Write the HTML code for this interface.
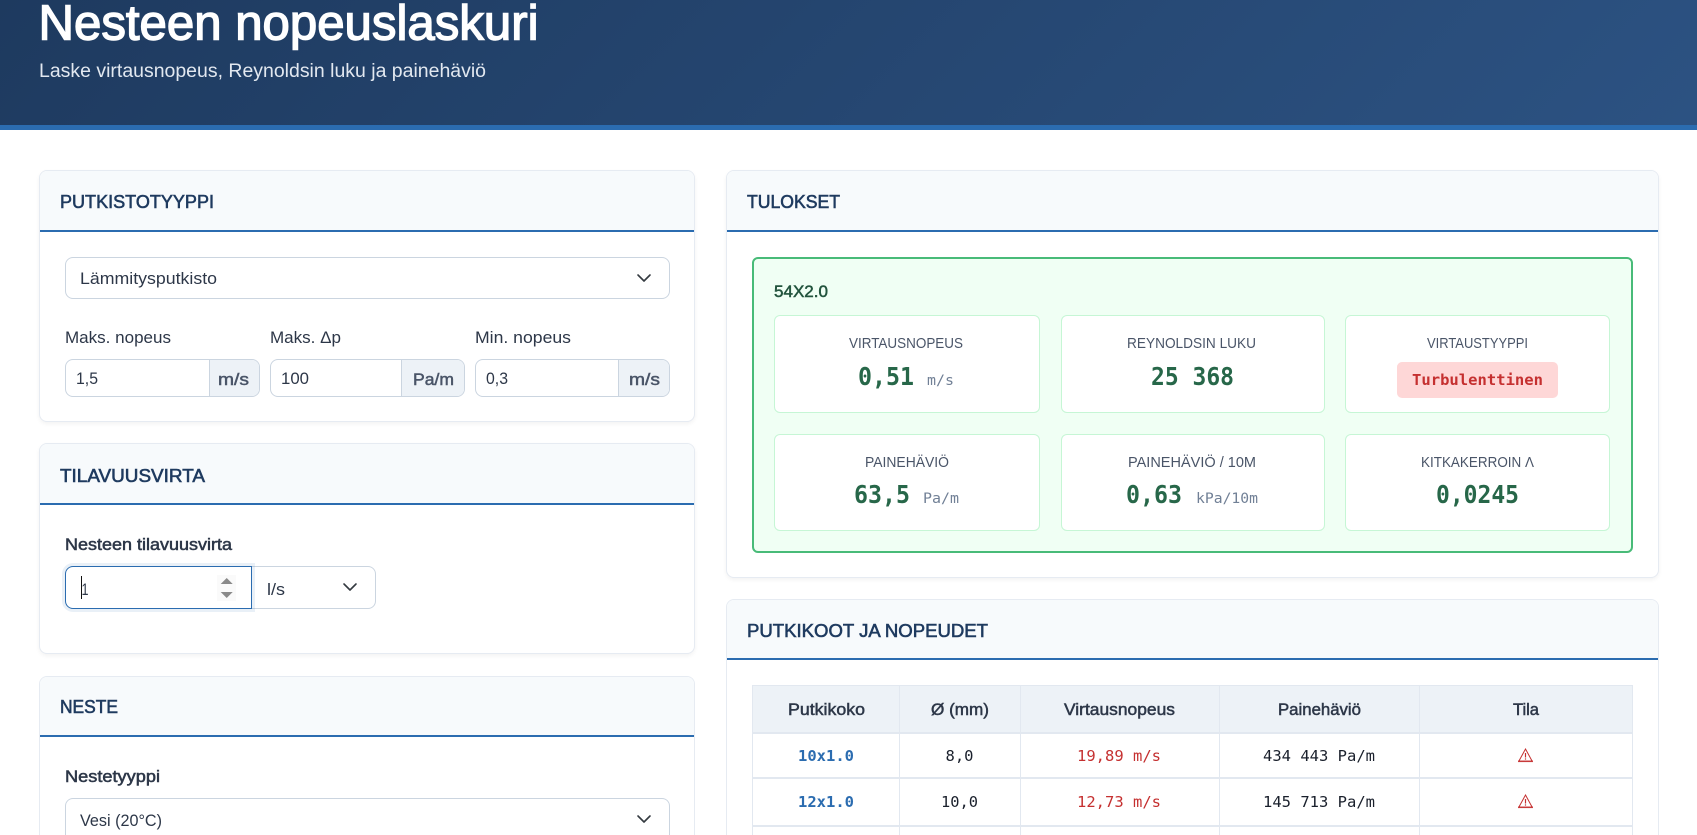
<!DOCTYPE html>
<html lang="fi"><head><meta charset="utf-8"><title>Nesteen nopeuslaskuri</title>
<style>
html,body{margin:0;padding:0;background:#fff;width:1697px;height:835px;overflow:hidden}
#page{position:relative;width:1697px;height:835px;overflow:hidden;background:#fff}
.b{position:absolute;box-sizing:border-box}
.hdr{left:0;top:0;width:1697px;height:130px;background:linear-gradient(135deg,#1e3a5f,#2c5282);border-bottom:5px solid #2b6cb0}
.card{background:#fff;border:1px solid #e6ebf2;border-radius:8px;box-shadow:0 2px 4px rgba(0,0,0,.05);overflow:hidden}
.ch{position:absolute;left:0;right:0;top:0;background:#f7fafc;border-bottom:2px solid #2b6cb0}
.f{background:#fff;border:1px solid #cbd5e0;border-radius:8px}
.ad{background:#edf2f7;border-left:1px solid #cbd5e0;border-radius:0 7px 7px 0}
.m{background:#fff;border:1px solid #c6f6d5;border-radius:6px}
svg.o{position:absolute;left:0;top:0}
text{font-family:"Liberation Sans",Arial,sans-serif;fill:#2d3748;font-size:17px}
.mono{font-family:"DejaVu Sans Mono","Liberation Mono",monospace}
.ct{font-size:18px;fill:#1e3a5f;stroke:#1e3a5f;stroke-width:.6px}
.sb{fill:#2d3748;stroke:#2d3748;stroke-width:.55px}
.lb{font-size:15px;fill:#4a5568}
.v{font-family:"DejaVu Sans Mono","Liberation Mono",monospace;font-weight:700;font-size:24.5px;fill:#276749}
.u{font-family:"DejaVu Sans Mono","Liberation Mono",monospace;font-size:14px;fill:#718096}
.th{font-size:16.5px;fill:#2d3748;stroke:#2d3748;stroke-width:.5px}
.td{font-family:"DejaVu Sans Mono","Liberation Mono",monospace;font-size:15.5px;fill:#1a202c}
.ad2{fill:#4a5568;stroke:#4a5568;stroke-width:.5px}
</style></head><body>
<div id="page">
<div class="b hdr"></div>

<div class="b card" style="left:39px;top:170px;width:656px;height:252px"><div class="ch" style="height:59px"></div></div>
<div class="b card" style="left:39px;top:443px;width:656px;height:211px"><div class="ch" style="height:59px"></div></div>
<div class="b card" style="left:39px;top:676px;width:656px;height:159px;border-bottom:none;border-radius:8px 8px 0 0;box-shadow:none"><div class="ch" style="height:58px"></div></div>
<div class="b card" style="left:726px;top:170px;width:933px;height:408px"><div class="ch" style="height:59px"></div></div>
<div class="b card" style="left:726px;top:599px;width:933px;height:236px;border-bottom:none;border-radius:8px 8px 0 0;box-shadow:none"><div class="ch" style="height:58px"></div></div>

<div class="b f" style="left:65px;top:257px;width:605px;height:42px"></div>
<div class="b f" style="left:65px;top:359px;width:195px;height:38px"><div class="b ad" style="left:143px;top:0;width:50px;height:36px"></div></div>
<div class="b f" style="left:270px;top:359px;width:195px;height:38px"><div class="b ad" style="left:130px;top:0;width:63px;height:36px"></div></div>
<div class="b f" style="left:475px;top:359px;width:195px;height:38px"><div class="b ad" style="left:142px;top:0;width:51px;height:36px"></div></div>

<div class="b f" style="left:240px;top:566px;width:136px;height:43px;border-radius:0 8px 8px 0"></div>
<div class="b" style="left:65px;top:566px;width:187px;height:43px;background:#fff;border:1px solid #2b6cb0;border-radius:8px 0 0 8px;box-shadow:0 0 0 3px rgba(43,108,176,.1)"></div>
<div class="b" style="left:217px;top:575px;width:19px;height:26px;background:#fafafa"></div>
<div class="b" style="left:81px;top:576px;width:1px;height:23px;background:#111"></div>

<div class="b f" style="left:65px;top:798px;width:605px;height:37px;border-bottom:none;border-radius:8px 8px 0 0"></div>

<div class="b" style="left:752px;top:257px;width:881px;height:296px;background:#f0fff4;border:2px solid #48bb78;border-radius:6px"></div>
<div class="b m" style="left:774px;top:315px;width:266px;height:98px"></div>
<div class="b m" style="left:1061px;top:315px;width:264px;height:98px"></div>
<div class="b m" style="left:1345px;top:315px;width:265px;height:98px"></div>
<div class="b m" style="left:774px;top:434px;width:266px;height:97px"></div>
<div class="b m" style="left:1061px;top:434px;width:264px;height:97px"></div>
<div class="b m" style="left:1345px;top:434px;width:265px;height:97px"></div>
<div class="b" style="left:1397px;top:362px;width:161px;height:36px;background:#fed7d7;border-radius:5px"></div>

<div class="b" style="left:752px;top:685px;width:881px;height:48px;background:#edf2f7"></div>
<div class="b" style="left:752px;top:685px;width:881px;height:150px;border:1px solid #e2e8f0;border-bottom:none"></div>
<div class="b" style="left:752px;top:732px;width:881px;height:2px;background:#e2e8f0"></div>
<div class="b" style="left:752px;top:777px;width:881px;height:2px;background:#e2e8f0"></div>
<div class="b" style="left:752px;top:825px;width:881px;height:2px;background:#e2e8f0"></div>
<div class="b" style="left:899px;top:685px;width:1px;height:150px;background:#e2e8f0"></div>
<div class="b" style="left:1020px;top:685px;width:1px;height:150px;background:#e2e8f0"></div>
<div class="b" style="left:1219px;top:685px;width:1px;height:150px;background:#e2e8f0"></div>
<div class="b" style="left:1419px;top:685px;width:1px;height:150px;background:#e2e8f0"></div>

<svg class="o" width="1697" height="835" viewBox="0 0 1697 835" xmlns="http://www.w3.org/2000/svg">
<text x="38.5" y="39.5" textLength="500" lengthAdjust="spacingAndGlyphs" style="font-size:49px;fill:#fff;stroke:#fff;stroke-width:1.4px">Nesteen nopeuslaskuri</text>
<text x="39" y="77" textLength="447" lengthAdjust="spacingAndGlyphs" style="font-size:19px;fill:#e2e8f0">Laske virtausnopeus, Reynoldsin luku ja painehäviö</text>

<text class="ct" x="60" y="208" textLength="154" lengthAdjust="spacingAndGlyphs">PUTKISTOTYYPPI</text>
<text class="ct" x="60" y="482" textLength="145" lengthAdjust="spacingAndGlyphs">TILAVUUSVIRTA</text>
<text class="ct" x="60" y="713" textLength="58" lengthAdjust="spacingAndGlyphs">NESTE</text>
<text class="ct" x="747" y="208" textLength="93" lengthAdjust="spacingAndGlyphs">TULOKSET</text>
<text class="ct" x="747" y="637" textLength="241" lengthAdjust="spacingAndGlyphs">PUTKIKOOT JA NOPEUDET</text>

<text x="80" y="284" textLength="137" lengthAdjust="spacingAndGlyphs">Lämmitysputkisto</text>
<text x="65" y="343" textLength="106" lengthAdjust="spacingAndGlyphs">Maks. nopeus</text>
<text x="270" y="343" textLength="71" lengthAdjust="spacingAndGlyphs">Maks. Δp</text>
<text x="475" y="343" textLength="96" lengthAdjust="spacingAndGlyphs">Min. nopeus</text>
<text x="76" y="384" textLength="22" lengthAdjust="spacingAndGlyphs">1,5</text>
<text x="281" y="384" textLength="28" lengthAdjust="spacingAndGlyphs">100</text>
<text x="486" y="384" textLength="22" lengthAdjust="spacingAndGlyphs">0,3</text>
<text class="ad2" x="218" y="385" textLength="31" lengthAdjust="spacingAndGlyphs">m/s</text>
<text class="ad2" x="413" y="385" textLength="41" lengthAdjust="spacingAndGlyphs">Pa/m</text>
<text class="ad2" x="629" y="385" textLength="31" lengthAdjust="spacingAndGlyphs">m/s</text>

<text class="sb" x="65" y="550" textLength="167" lengthAdjust="spacingAndGlyphs">Nesteen tilavuusvirta</text>
<text x="81.5" y="595" textLength="7" lengthAdjust="spacingAndGlyphs">1</text>
<text x="267" y="595" textLength="18" lengthAdjust="spacingAndGlyphs">l/s</text>
<text class="sb" x="65" y="782" textLength="95" lengthAdjust="spacingAndGlyphs">Nestetyyppi</text>
<text x="80" y="826" textLength="82" lengthAdjust="spacingAndGlyphs">Vesi (20°C)</text>

<text x="774" y="297" textLength="54" lengthAdjust="spacingAndGlyphs" style="fill:#22543d;stroke:#22543d;stroke-width:.5px">54X2.0</text>

<text class="lb" x="849" y="348" textLength="114" lengthAdjust="spacingAndGlyphs">VIRTAUSNOPEUS</text>
<text class="lb" x="1127" y="348" textLength="129" lengthAdjust="spacingAndGlyphs">REYNOLDSIN LUKU</text>
<text class="lb" x="1427" y="348" textLength="101" lengthAdjust="spacingAndGlyphs">VIRTAUSTYYPPI</text>
<text class="lb" x="865" y="467" textLength="84" lengthAdjust="spacingAndGlyphs">PAINEHÄVIÖ</text>
<text class="lb" x="1128" y="467" textLength="128" lengthAdjust="spacingAndGlyphs">PAINEHÄVIÖ / 10M</text>
<text class="lb" x="1421" y="467" textLength="113" lengthAdjust="spacingAndGlyphs">KITKAKERROIN Λ</text>

<text class="v" x="858" y="385" textLength="56" lengthAdjust="spacingAndGlyphs">0,51</text>
<text class="u" x="927" y="385" textLength="27" lengthAdjust="spacingAndGlyphs">m/s</text>
<text class="v" x="1151" y="385" textLength="83" lengthAdjust="spacingAndGlyphs">25 368</text>
<text class="mono" x="1412" y="385" textLength="131" lengthAdjust="spacingAndGlyphs" style="font-weight:700;font-size:15.5px;fill:#c53030">Turbulenttinen</text>
<text class="v" x="854" y="503" textLength="56" lengthAdjust="spacingAndGlyphs">63,5</text>
<text class="u" x="923" y="503" textLength="36" lengthAdjust="spacingAndGlyphs">Pa/m</text>
<text class="v" x="1126" y="503" textLength="56" lengthAdjust="spacingAndGlyphs">0,63</text>
<text class="u" x="1196" y="503" textLength="62" lengthAdjust="spacingAndGlyphs">kPa/10m</text>
<text class="v" x="1436" y="503" textLength="83" lengthAdjust="spacingAndGlyphs">0,0245</text>

<text class="th" x="788" y="715" textLength="77" lengthAdjust="spacingAndGlyphs">Putkikoko</text>
<text class="th" x="931" y="715" textLength="58" lengthAdjust="spacingAndGlyphs">Ø (mm)</text>
<text class="th" x="1064" y="715" textLength="111" lengthAdjust="spacingAndGlyphs">Virtausnopeus</text>
<text class="th" x="1278" y="715" textLength="83" lengthAdjust="spacingAndGlyphs">Painehäviö</text>
<text class="th" x="1513" y="715" textLength="26" lengthAdjust="spacingAndGlyphs">Tila</text>

<text class="td" x="798" y="761" textLength="56" lengthAdjust="spacingAndGlyphs" style="font-weight:700;fill:#2b6cb0">10x1.0</text>
<text class="td" x="945.5" y="761" textLength="28" lengthAdjust="spacingAndGlyphs">8,0</text>
<text class="td" x="1077" y="761" textLength="84" lengthAdjust="spacingAndGlyphs" style="fill:#c53030">19,89 m/s</text>
<text class="td" x="1263" y="761" textLength="112" lengthAdjust="spacingAndGlyphs">434 443 Pa/m</text>
<text class="td" x="798" y="807" textLength="56" lengthAdjust="spacingAndGlyphs" style="font-weight:700;fill:#2b6cb0">12x1.0</text>
<text class="td" x="941" y="807" textLength="37" lengthAdjust="spacingAndGlyphs">10,0</text>
<text class="td" x="1077" y="807" textLength="84" lengthAdjust="spacingAndGlyphs" style="fill:#c53030">12,73 m/s</text>
<text class="td" x="1263" y="807" textLength="112" lengthAdjust="spacingAndGlyphs">145 713 Pa/m</text>

<g fill="none" stroke="#343a40" stroke-width="1.6" stroke-linecap="round" stroke-linejoin="round">
<path d="M638 275l6 6 6-6"/>
<path d="M344 584l6 6 6-6"/>
<path d="M638 816l6 6 6-6"/>
</g>
<path d="M226.7 578l6 6h-12zM220.7 592h12l-6 6z" fill="#8a8a8a"/>

<g>
<path d="M1525.5 749l6.7 12.2h-13.4z" fill="none" stroke="#c53030" stroke-width="1"/>
<path d="M1518 760.5h15v1.6h-15z" fill="#c53030" opacity=".8"/>
<path d="M1525.5 753v4.5M1525.5 758.4v1.2" stroke="#c53030" stroke-width="1.2"/>
</g>
<g>
<path d="M1525.5 795l6.7 12.2h-13.4z" fill="none" stroke="#c53030" stroke-width="1"/>
<path d="M1518 806.5h15v1.6h-15z" fill="#c53030" opacity=".8"/>
<path d="M1525.5 799v4.5M1525.5 804.4v1.2" stroke="#c53030" stroke-width="1.2"/>
</g>
</svg>
</div>
</body></html>
